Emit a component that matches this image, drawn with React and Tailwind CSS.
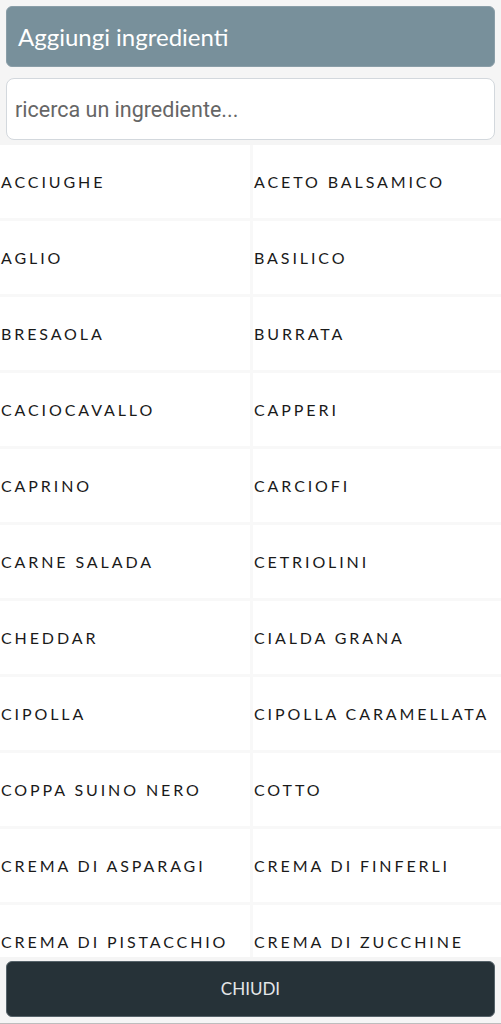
import React, { useState } from 'react';

const ingredients = [
  'ACCIUGHE', 'ACETO BALSAMICO',
  'AGLIO', 'BASILICO',
  'BRESAOLA', 'BURRATA',
  'CACIOCAVALLO', 'CAPPERI',
  'CAPRINO', 'CARCIOFI',
  'CARNE SALADA', 'CETRIOLINI',
  'CHEDDAR', 'CIALDA GRANA',
  'CIPOLLA', 'CIPOLLA CARAMELLATA',
  'COPPA SUINO NERO', 'COTTO',
  'CREMA DI ASPARAGI', 'CREMA DI FINFERLI',
  'CREMA DI PISTACCHIO', 'CREMA DI ZUCCHINE',
];

const App = () => {
  const [query, setQuery] = useState('');

  const filtered = ingredients.filter(i => i.toLowerCase().includes(query.toLowerCase()));

  return (
    <div className="h-[1024px] flex flex-col bg-[#f5f5f5] font-['Lato',sans-serif] overflow-hidden">
      <div className="px-[6px] pt-[6px]">
        <div className="h-[61px] rounded-md bg-[#78909b] border border-[#8a9ea8] flex items-center px-[11px]">
          <h1 className="text-[24px] text-white">Aggiungi ingredienti</h1>
        </div>

        <input
          type="text"
          value={query}
          onChange={(e) => setQuery(e.target.value)}
          placeholder="ricerca un ingrediente..."
          className="mt-[11px] w-full h-[62px] rounded-lg bg-white border border-[#d3d8dd] px-[8px] text-[21.5px] font-['Roboto',sans-serif] text-[#444] placeholder:text-[#666] outline-none"
        />
      </div>

      <div className="flex-1 min-h-0 overflow-hidden mt-[5px]">
        <div className="grid grid-cols-[250px_1fr] gap-[3px] bg-[#f8f8f8]">
          {filtered.map(item => (
            <button
              key={item}
              className="h-[73px] bg-white flex items-center pl-[1px] text-left text-[16px] tracking-[2.9px] text-[#1a1a1a] whitespace-nowrap"
            >
              {item}
            </button>
          ))}
        </div>
      </div>

      <div className="px-[6px] pt-[4px] pb-[6px] border-b border-[#bdbdbd]">
        <button className="w-full h-[56px] rounded-md bg-[#263238] border border-[#56636a] text-[#e4e6e8] text-[17px]">
          CHIUDI
        </button>
      </div>
    </div>
  );
};

export default App;
